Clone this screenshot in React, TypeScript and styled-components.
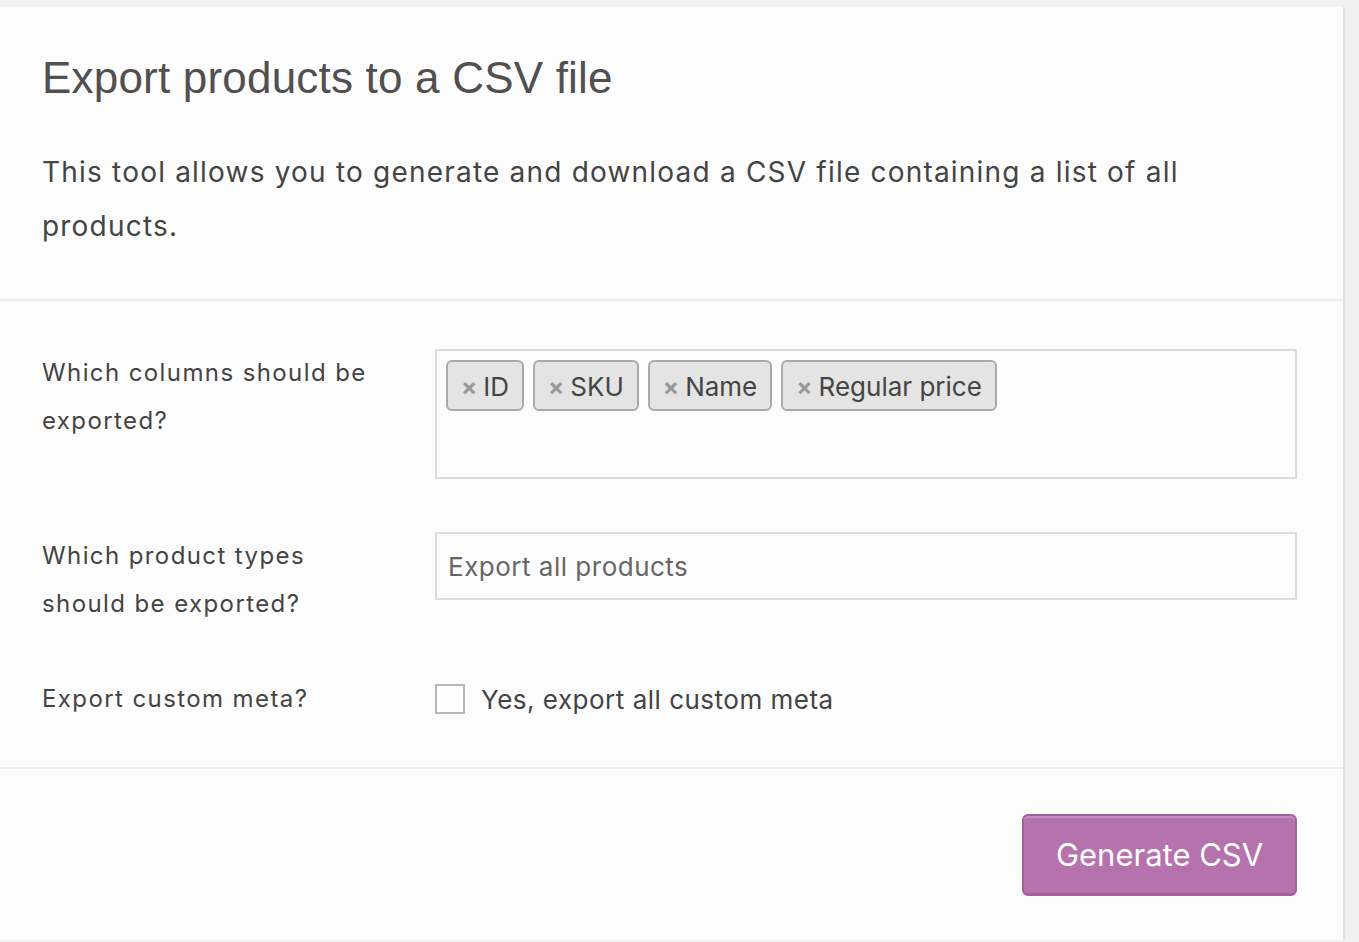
import React from 'react'
import styled, { createGlobalStyle } from 'styled-components'

const GlobalStyle = createGlobalStyle`
    body {
        margin: 0;
        background: #f1f1f1;
        font-family: Inter, "Liberation Sans", sans-serif;
        color: #444;
    }
`

const columns = ['ID', 'SKU', 'Name', 'Regular price']

const App = () => {
    return (
        <Page>
            <GlobalStyle />
            <Card>
                <Header>
                    <Title>Export products to a CSV file</Title>
                    <Description>
                        This tool allows you to generate and download a CSV file containing a list of all products.
                    </Description>
                </Header>

                <Form>
                    <Row>
                        <Label>Which columns should be exported?</Label>
                        <MultiSelect>
                            {columns.map(col => (
                                <Tag key={col}>
                                    <Remove>×</Remove>
                                    {col}
                                </Tag>
                            ))}
                        </MultiSelect>
                    </Row>
                    <Row $top={53}>
                        <Label>Which product types should be exported?</Label>
                        <SelectBox>Export all products</SelectBox>
                    </Row>
                    <Row $top={47}>
                        <Label>Export custom meta?</Label>
                        <CheckRow>
                            <Checkbox />
                            Yes, export all custom meta
                        </CheckRow>
                    </Row>
                </Form>

                <Footer>
                    <Button>Generate CSV</Button>
                </Footer>
            </Card>
        </Page>
    )
}

export default App

const Page = styled.div`
    padding-top: 7px;
    min-height: 100vh;
    box-sizing: border-box;
`
const Card = styled.div`
    width: 1345px;
    height: 933px;
    background: #fcfcfc;
    border-right: 2px solid #e2e2e2;
    box-sizing: border-box;
    display: flex;
    flex-direction: column;
`
const Header = styled.div`
    padding: 44px 42px 46px;
    border-bottom: 2px solid #ececec;
`
const Title = styled.h1`
    margin: 0;
    font-family: "Liberation Sans", Arial, sans-serif;
    font-weight: normal;
    font-size: 44px;
    line-height: 53px;
    letter-spacing: 0.2px;
    color: #505050;
`
const Description = styled.p`
    margin: 41px 0 0;
    max-width: 1180px;
    font-size: 28px;
    line-height: 54px;
    letter-spacing: 1.2px;
    color: #444;
`
const Form = styled.div`
    padding: 48px 46px 44px 42px;
    border-bottom: 2px solid #ececec;
    display: flex;
    flex-direction: column;
`
const Row = styled.div<{ $top?: number }>`
    display: grid;
    grid-template-columns: 393px 1fr;
    align-items: start;
    margin-top: ${p => p.$top ?? 0}px;
`
const Label = styled.div`
    font-size: 24px;
    line-height: 48px;
    letter-spacing: 1.4px;
    max-width: 340px;
    color: #444;
`
const MultiSelect = styled.div`
    height: 130px;
    box-sizing: border-box;
    border: 2px solid #dcdcdc;
    padding: 9px;
    display: flex;
    align-items: flex-start;
    gap: 9px;
`
const Tag = styled.div`
    display: flex;
    align-items: center;
    gap: 6px;
    height: 51px;
    box-sizing: border-box;
    padding: 2px 13px 0 13px;
    background: #e4e4e4;
    border: 2px solid #aaa;
    border-radius: 6px;
    font-size: 26px;
    color: #444;
`
const Remove = styled.span`
    color: #999;
    font-weight: bold;
    font-size: 24px;
`
const SelectBox = styled.div`
    height: 68px;
    box-sizing: border-box;
    border: 2px solid #dcdcdc;
    padding: 0 11px;
    display: flex;
    align-items: center;
    font-size: 26px;
    letter-spacing: 0.5px;
    color: #666;
`
const CheckRow = styled.label`
    display: flex;
    align-items: center;
    gap: 16px;
    height: 48px;
    font-size: 26px;
    letter-spacing: 0.5px;
    color: #444;
`
const Checkbox = styled.span`
    width: 30px;
    height: 30px;
    box-sizing: border-box;
    border: 2px solid #b4b9be;
    background: #fefefe;
`
const Footer = styled.div`
    flex: 1;
    display: flex;
    justify-content: flex-end;
    align-items: center;
    padding: 0 46px 0 42px;
`
const Button = styled.button`
    width: 275px;
    height: 82px;
    border: 2px solid #a4609b;
    border-bottom-width: 3px;
    border-radius: 6px;
    background: #b672ad;
    box-shadow: inset 0 2px 0 rgba(255, 255, 255, 0.2);
    color: #fff;
    font-family: Inter, "Liberation Sans", sans-serif;
    font-size: 31px;
    cursor: pointer;
`
